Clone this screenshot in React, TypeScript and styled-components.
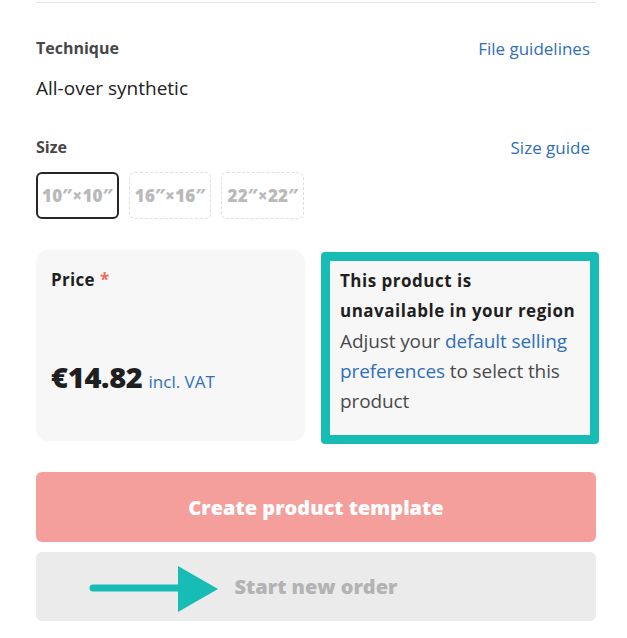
import React from "react";
import styled, { createGlobalStyle } from "styled-components";

const GlobalStyle = createGlobalStyle`
  html, body {
    margin: 0;
    padding: 0;
    background: #ffffff;
  }
  body {
    font-family: "Open Sans", Lato, "Liberation Sans", sans-serif;
    color: #222222;
    -webkit-font-smoothing: antialiased;
  }
`;

const Page = styled.div`
  width: 560px;
  padding: 2px 31px 0 36px;
`;

const Divider = styled.div`
  height: 1px;
  background: #e4e4e4;
`;

const SectionHeader = styled.div<{ $top: number }>`
  display: flex;
  justify-content: space-between;
  align-items: center;
  margin-top: ${(p) => p.$top}px;
  height: 20px;
`;

const Label = styled.span`
  font-size: 16px;
  font-weight: 700;
  color: #474747;
`;

const Link = styled.a`
  font-size: 17px;
  color: #2f6fba;
  text-decoration: none;
  margin-right: 6px;
`;

const Value = styled.div`
  margin-top: 17px;
  font-size: 19px;
  line-height: 26px;
  color: #222222;
`;

const ChipRow = styled.div`
  display: flex;
  gap: 10px;
  margin-top: 15px;
`;

const Chip = styled.button<{ $selected?: boolean }>`
  height: 47px;
  padding: 0 ${(p) => (p.$selected ? 4 : 5)}px;
  box-sizing: border-box;
  border-radius: 6px;
  background: #ffffff;
  font-family: inherit;
  font-size: 17px;
  font-weight: 800;
  color: #b9b9b9;
  letter-spacing: 0.2px;
  border: ${(p) => (p.$selected ? "2px solid #262626" : "1px dashed #dedede")};
`;

const Cards = styled.div`
  display: grid;
  grid-template-columns: 269px 278px;
  column-gap: 16px;
  align-items: start;
  margin-top: 31px;
`;

const PriceCard = styled.div`
  height: 191px;
  box-sizing: border-box;
  background: #f7f7f7;
  border-radius: 12px;
  padding: 19px 15px 0;
`;

const PriceLabel = styled.div`
  font-size: 17px;
  font-weight: 700;
  color: #1f1f1f;
  line-height: 22px;
  letter-spacing: 0.3px;
`;

const Required = styled.span`
  color: #f06a5e;
  margin-left: 5px;
  font-weight: 700;
`;

const Amount = styled.div`
  margin-top: 66px;
  display: flex;
  align-items: baseline;
  gap: 6px;
`;

const Big = styled.span`
  font-size: 29px;
  font-weight: 800;
  color: #1f1f1f;
  letter-spacing: -0.3px;
`;

const Vat = styled.span`
  font-size: 17px;
  color: #2f6fba;
`;

const Notice = styled.div`
  margin-top: 2px;
  height: 192px;
  box-sizing: border-box;
  border: 9px solid #17bdb5;
  border-radius: 4px;
  background: #f7f7f7;
  padding: 5px 6px 0 10px;
  font-size: 19px;
  line-height: 30px;
  color: #4a4a4a;
  letter-spacing: -0.1px;
`;

const NoticeTitle = styled.div`
  font-size: 17px;
  font-weight: 700;
  color: #1f1f1f;
  letter-spacing: 0.5px;
`;

const InlineLink = styled.a`
  color: #2f6fba;
  text-decoration: none;
`;

const Button = styled.button<{ $variant: "primary" | "muted"; $top: number }>`
  position: relative;
  display: flex;
  align-items: center;
  justify-content: center;
  width: 100%;
  height: ${(p) => (p.$variant === "primary" ? 70 : 69)}px;
  margin-top: ${(p) => p.$top}px;
  border: none;
  border-radius: 6px;
  font-family: inherit;
  font-size: 20px;
  font-weight: 800;
  background: ${(p) => (p.$variant === "primary" ? "#f49f9c" : "#ebebeb")};
  color: ${(p) => (p.$variant === "primary" ? "#ffffff" : "#b3b3b3")};
`;

const ArrowMark = styled.svg`
  position: absolute;
  left: 50px;
  top: 14px;
`;

const sizes = ["10″×10″", "16″×16″", "22″×22″"];

export default function App() {
  return (
    <>
      <GlobalStyle />
      <Page>
        <Divider />

        <SectionHeader $top={35}>
          <Label>Technique</Label>
          <Link>File guidelines</Link>
        </SectionHeader>
        <Value>All-over synthetic</Value>

        <SectionHeader $top={36}>
          <Label>Size</Label>
          <Link>Size guide</Link>
        </SectionHeader>
        <ChipRow>
          {sizes.map((s, i) => (
            <Chip key={s} $selected={i === 0}>
              {s}
            </Chip>
          ))}
        </ChipRow>

        <Cards>
          <PriceCard>
            <PriceLabel>
              Price<Required>*</Required>
            </PriceLabel>
            <Amount>
              <Big>€14.82</Big>
              <Vat>incl. VAT</Vat>
            </Amount>
          </PriceCard>
          <Notice>
            <NoticeTitle>
              This product is
              <br />
              unavailable in your region
            </NoticeTitle>
            Adjust your <InlineLink>default selling preferences</InlineLink> to
            select this product
          </Notice>
        </Cards>

        <Button $variant="primary" $top={28}>
          Create product template
        </Button>
        <Button $variant="muted" $top={10}>
          <ArrowMark width="134" height="46" viewBox="0 0 134 46">
            <line x1="7" y1="22" x2="96" y2="22" stroke="#17bdb5" strokeWidth="7" strokeLinecap="round" />
            <polygon points="92,0 132,23 92,46" fill="#17bdb5" />
          </ArrowMark>
          Start new order
        </Button>
      </Page>
    </>
  );
}
